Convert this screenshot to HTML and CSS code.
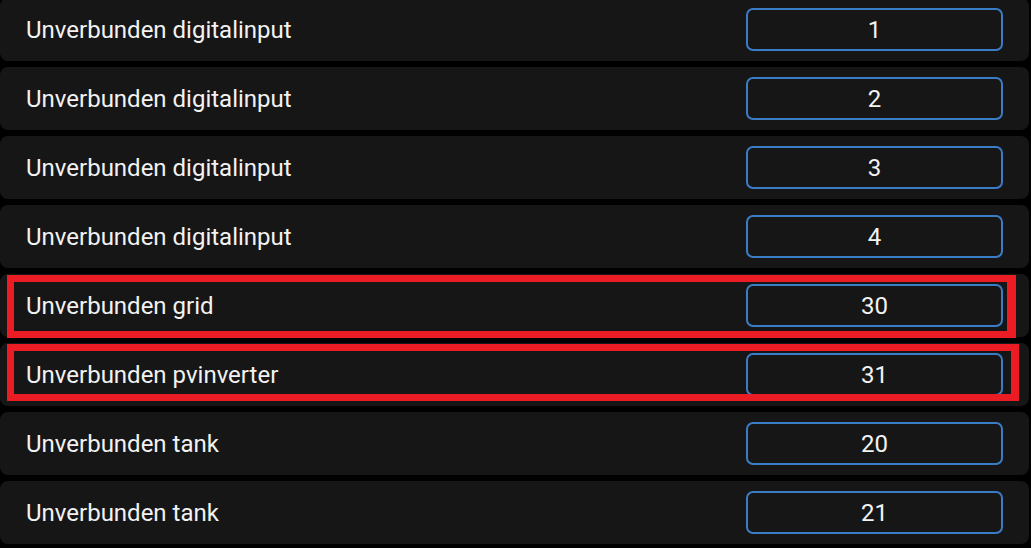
FILE: index.html
```html
<!DOCTYPE html>
<html lang="de">
<head>
<meta charset="utf-8">
<title>Unverbunden</title>
<link rel="stylesheet" href="styles.css">
</head>
<body>
<div class="list">
  <div class="row"><span class="label">Unverbunden digitalinput</span><div class="field">1</div></div>
  <div class="row"><span class="label">Unverbunden digitalinput</span><div class="field">2</div></div>
  <div class="row"><span class="label">Unverbunden digitalinput</span><div class="field">3</div></div>
  <div class="row"><span class="label">Unverbunden digitalinput</span><div class="field">4</div></div>
  <div class="row"><span class="label">Unverbunden grid</span><div class="field">30</div><div class="mark mark-a"></div></div>
  <div class="row"><span class="label">Unverbunden pvinverter</span><div class="field">31</div><div class="mark mark-b"></div></div>
  <div class="row"><span class="label">Unverbunden tank</span><div class="field">20</div></div>
  <div class="row"><span class="label">Unverbunden tank</span><div class="field">21</div></div>
</div>
</body>
</html>
```
FILE: styles.css
```css
html, body {
  margin: 0;
  padding: 0;
  background: #000;
  height: 100%;
  overflow: hidden;
}
body {
  font-family: Roboto, "Liberation Sans", sans-serif;
  color: #f2f2f2;
}
.list {
  display: flex;
  flex-direction: column;
  gap: 6px;
  margin-top: -2px;
  width: 1029px;
}
.row {
  position: relative;
  height: 63px;
  background: #161616;
  border-radius: 8px;
  display: flex;
  align-items: center;
  justify-content: space-between;
  padding: 0 26px;
  box-sizing: border-box;
}
.label {
  font-size: 24px;
}
.field {
  width: 257px;
  height: 43px;
  box-sizing: border-box;
  border: 2px solid #3b7cc7;
  border-radius: 7px;
  display: flex;
  align-items: center;
  justify-content: center;
  font-size: 24px;
}
.mark {
  position: absolute;
  border: 7px solid #ec1c24;
  box-sizing: border-box;
  pointer-events: none;
}
.mark-a {
  left: 7px;
  top: 1px;
  width: 1009px;
  height: 63px;
  border-right-width: 9px;
}
.mark-b {
  left: 7px;
  top: 1px;
  width: 1012px;
  height: 57px;
  border-right-width: 8px;
}
```
